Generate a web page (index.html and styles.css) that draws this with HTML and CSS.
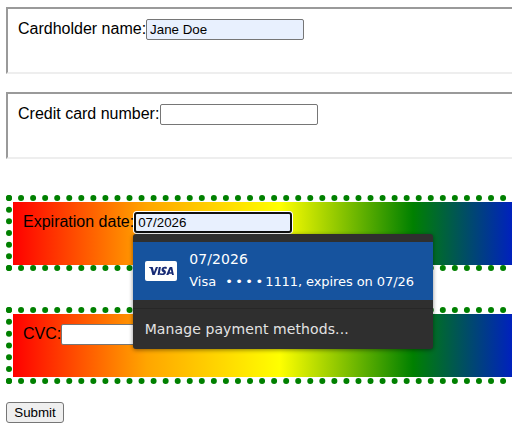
FILE: index.html
```html
<!DOCTYPE html>
<html lang="en">
<head>
<meta charset="utf-8">
<title>Payment form</title>
<link rel="stylesheet" href="styles.css">
</head>
<body>
<form class="form">
  <div class="frame"><label for="name">Cardholder name:</label><input id="name" class="filled" value="Jane Doe"></div>
  <div class="frame"><label for="number" class="number-label">Credit card number:</label><input id="number"></div>
  <div class="frame rainbow">
    <label for="exp">Expiration date:</label><div class="anchor"><input id="exp" class="filled active" value="07/2026">
      <div class="popup">
        <div class="suggestion">
          <svg class="visa" viewBox="0 0 32 20" width="32" height="20"><rect width="32" height="20" rx="2" fill="#fff"/><path d="M4 6H7.7L9 10.9 10.9 6H13.1L9.7 14H7.4L5.8 7.8 4 6.5Z M13.8 6H15.9L14.6 14H12.5Z M21.9 6.2L21.5 7.9Q19 7 18.6 8.1C18.5 8.9 21.2 9.2 20.9 11.5C20.5 14 17.5 14.6 14.9 13.7L15.3 11.9Q18.3 13.1 18.7 11.8C18.8 10.9 16.2 10.6 16.5 8.4C16.9 5.9 19.7 5.4 21.9 6.2Z M25.3 6H27.2L28.9 14H27L26.8 12.8H24L23.4 14H21.2L24.4 6.6Q24.7 6 25.3 6Z M25.8 8.3L24.6 11.3H26.4Z" fill="#172b75" fill-rule="evenodd"/></svg>
          <div class="details">
            <div class="value">07/2026</div>
            <div class="card"><span class="brand">Visa</span><span class="dots">••••</span><span class="rest">1111, expires on 07/26</span></div>
          </div>
        </div>
        <div class="manage">Manage payment methods...</div>
      </div>
    </div>
  </div>
  <div class="frame rainbow last"><label for="cvc">CVC:</label><input id="cvc"></div>
  <button type="button" class="submit">Submit</button>
</form>
</body>
</html>
```
FILE: styles.css
```css
* { box-sizing: border-box; }
html, body { margin: 0; overflow: hidden; background: #fff; }
body { height: 432px; font: 16px/18px "Liberation Sans", Arial, sans-serif; color: #000; }
.form { width: 100%; height: 432px; padding: 7px 0 0 6px; overflow: hidden; }
.frame {
  display: flex;
  align-items: flex-start;
  width: 816px;
  height: 67px;
  margin-bottom: 18px;
  padding: 10px;
  border: 2px solid;
  border-color: #9a9a9a #eee #eee #9a9a9a;
}
label { padding-top: 1px; white-space: nowrap; }
.number-label { padding-right: 1px; }
input {
  display: block;
  width: 158px;
  height: 21px;
  margin: 0;
  padding: 1px 3px;
  border: 1px solid #767676;
  border-radius: 2px;
  background: #fff;
  color: #000;
  font: 13.333px "Liberation Sans", Arial, sans-serif;
  outline: none;
}
.filled { background: #e8f0fe; }
.active { padding: 0 2px; border: 2px solid #101010; border-radius: 3px; box-shadow: 0 0 0 1px #fff; }
.rainbow {
  width: 802px;
  height: 76px;
  margin: 36px 0;
  padding: 11px;
  border: 6px dotted green;
  background: linear-gradient(to right, red, orange, yellow, green, blue, indigo, violet) 1px 1px / 800px 63px no-repeat padding-box;
}
.rainbow.last { height: 77px; margin-bottom: 18px; }
.anchor { position: relative; }
.popup {
  position: absolute;
  z-index: 2;
  top: 22px;
  left: -1px;
  width: 300px;
  height: 115px;
  padding-top: 8px;
  border-radius: 3px;
  background: #2f2f2f;
  box-shadow: 0 1px 4px rgba(0, 0, 0, .45);
  font-family: "DejaVu Sans", sans-serif;
  overflow: hidden;
}
.suggestion { display: flex; align-items: center; gap: 12px; height: 58px; padding-left: 12px; background: #16539e; color: #fff; }
.visa { flex: none; }
.details { padding-bottom: 1px; }
.value { font-size: 14px; line-height: 20px; letter-spacing: .08px; }
.card { display: flex; width: 226px; margin-top: 3px; font-size: 13px; line-height: 20px; white-space: nowrap; }
.brand { flex: none; width: 35px; }
.dots { flex: none; width: 41px; padding-left: 1px; letter-spacing: 2.4px; }
.rest { letter-spacing: -.08px; }
.manage { margin-top: 8px; padding: 10px 12px 0 11.5px; border-top: 1px solid #272727; color: #e3e3e3; font-size: 14px; line-height: 20px; letter-spacing: .1px; }
.submit { display: block; width: 58px; height: 21px; padding: 0; border: 1px solid #767676; border-radius: 3px; background: #efefef; color: #000; font: 13.333px "Liberation Sans", Arial, sans-serif; }
```
